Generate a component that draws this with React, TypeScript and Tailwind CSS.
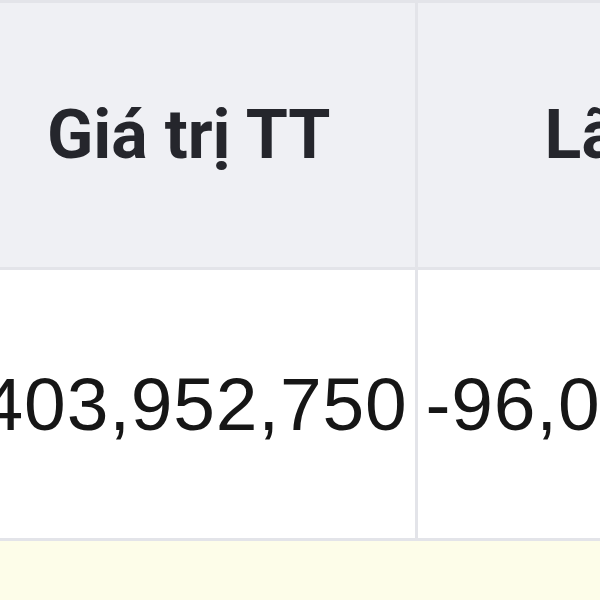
const columns = [
  { key: 'value', label: 'Giá trị TT', width: 'w-[453px]' },
  { key: 'pnl', label: 'Lãi/lỗ', width: 'w-[430px]' },
]

const rows = [
  { value: '403,952,750', pnl: '-96,047,250' },
]

export default function App() {
  return (
    <div className="w-[600px] h-[600px] overflow-hidden bg-white">
      <table className="ml-[-37px] w-[883px] max-w-none table-fixed border-collapse">
        <colgroup>
          {columns.map((col) => (
            <col key={col.key} className={col.width} />
          ))}
        </colgroup>
        <thead>
          <tr className="h-[267px] bg-[#eff0f4] border-t-[3px] border-b-[3px] border-[#e3e4e9]">
            {columns.map((col) => (
              <th
                key={col.key}
                className="p-0 text-center align-middle border-r-[3px] border-[#e3e4e9] font-['Roboto',sans-serif] font-bold text-[68px] leading-none text-[#25262c] whitespace-nowrap"
              >
                {col.label}
              </th>
            ))}
          </tr>
        </thead>
        <tbody>
          {rows.map((row, i) => (
            <tr key={i} className="h-[271px] border-b-[3px] border-[#e3e4e9] bg-white">
              <td className="pl-2 pr-[7px] text-right align-middle border-r-[3px] border-[#e3e4e9] font-['Liberation_Sans',Arial,sans-serif] text-[75px] tracking-[0.8px] leading-none text-[#161616] whitespace-nowrap">
                {row.value}
              </td>
              <td className="px-2 text-left align-middle border-r-[3px] border-[#e3e4e9] font-['Liberation_Sans',Arial,sans-serif] text-[75px] tracking-[0.8px] leading-none text-[#161616] whitespace-nowrap overflow-hidden">
                {row.pnl}
              </td>
            </tr>
          ))}
          <tr className="h-[120px] bg-[#fdfde9]">
            <td />
            <td />
          </tr>
        </tbody>
      </table>
    </div>
  )
}
